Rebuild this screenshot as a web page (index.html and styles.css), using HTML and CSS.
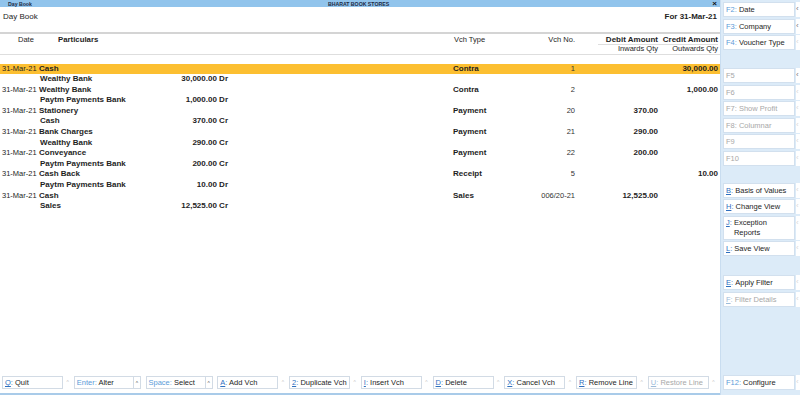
FILE: index.html
```html
<!DOCTYPE html>
<html lang="en">
<head>
    <meta charset="UTF-8">
    <title>Day Book</title>
    <link rel="stylesheet" href="styles.css">
</head>
<body>
    <div class="screen">
        <div class="main">
            <div class="topbar">
                <span class="tb-title">Day Book</span>
                <span class="tb-company">BHARAT BOOK STORES</span>
                <span class="tb-close">&times;</span>
            </div>
            <div class="report-title">
                <span>Day Book</span>
                <span class="period">For 31-Mar-21</span>
            </div>
            <div class="col-head">
                <div class="line grid">
                    <span class="h-date">Date</span>
                    <span class="h-part">Particulars</span>
                    <span></span>
                    <span class="h-type">Vch Type</span>
                    <span class="num">Vch No.</span>
                    <span class="num bold amt-head first">Debit Amount</span>
                    <span class="num bold amt-head">Credit Amount</span>
                </div>
                <div class="line grid">
                    <span></span><span></span><span></span><span></span><span></span>
                    <span class="num">Inwards Qty</span>
                    <span class="num">Outwards Qty</span>
                </div>
            </div>

            <div class="entries">
                <div class="entry">
                    <div class="line grid selected">
                        <span>31-Mar-21</span><span class="bold">Cash</span><span></span>
                        <span class="bold">Contra</span><span class="num">1</span><span></span><span class="num bold">30,000.00</span>
                    </div>
                    <div class="line grid">
                        <span></span><span class="sub"><b>Wealthy Bank</b><b>30,000.00 Dr</b></span>
                    </div>
                </div>
                <div class="entry">
                    <div class="line grid">
                        <span>31-Mar-21</span><span class="bold">Wealthy Bank</span><span></span>
                        <span class="bold">Contra</span><span class="num">2</span><span></span><span class="num bold">1,000.00</span>
                    </div>
                    <div class="line grid">
                        <span></span><span class="sub"><b>Paytm Payments Bank</b><b>1,000.00 Dr</b></span>
                    </div>
                </div>
                <div class="entry">
                    <div class="line grid">
                        <span>31-Mar-21</span><span class="bold">Stationery</span><span></span>
                        <span class="bold">Payment</span><span class="num">20</span><span class="num bold">370.00</span><span></span>
                    </div>
                    <div class="line grid">
                        <span></span><span class="sub"><b>Cash</b><b>370.00 Cr</b></span>
                    </div>
                </div>
                <div class="entry">
                    <div class="line grid">
                        <span>31-Mar-21</span><span class="bold">Bank Charges</span><span></span>
                        <span class="bold">Payment</span><span class="num">21</span><span class="num bold">290.00</span><span></span>
                    </div>
                    <div class="line grid">
                        <span></span><span class="sub"><b>Wealthy Bank</b><b>290.00 Cr</b></span>
                    </div>
                </div>
                <div class="entry">
                    <div class="line grid">
                        <span>31-Mar-21</span><span class="bold">Conveyance</span><span></span>
                        <span class="bold">Payment</span><span class="num">22</span><span class="num bold">200.00</span><span></span>
                    </div>
                    <div class="line grid">
                        <span></span><span class="sub"><b>Paytm Payments Bank</b><b>200.00 Cr</b></span>
                    </div>
                </div>
                <div class="entry">
                    <div class="line grid">
                        <span>31-Mar-21</span><span class="bold">Cash Back</span><span></span>
                        <span class="bold">Receipt</span><span class="num">5</span><span></span><span class="num bold">10.00</span>
                    </div>
                    <div class="line grid">
                        <span></span><span class="sub"><b>Paytm Payments Bank</b><b>10.00 Dr</b></span>
                    </div>
                </div>
                <div class="entry">
                    <div class="line grid">
                        <span>31-Mar-21</span><span class="bold">Cash</span><span></span>
                        <span class="bold">Sales</span><span class="num">006/20-21</span><span class="num bold">12,525.00</span><span></span>
                    </div>
                    <div class="line grid">
                        <span></span><span class="sub"><b>Sales</b><b>12,525.00 Cr</b></span>
                    </div>
                </div>
            </div>

            <div class="bottom-bar">
                <div class="bbtn"><span class="lbl"><u class="k">Q</u><span class="k">:</span> Quit</span><span class="caret">^</span></div>
                <div class="bbtn"><span class="lbl"><span class="kf">Enter:</span> Alter</span><span class="caret on">^</span></div>
                <div class="bbtn"><span class="lbl"><span class="kf">Space:</span> Select</span><span class="caret on">^</span></div>
                <div class="bbtn"><span class="lbl"><u class="k">A</u><span class="k">:</span> Add Vch</span><span class="caret">^</span></div>
                <div class="bbtn"><span class="lbl"><u class="k">2</u><span class="k">:</span> Duplicate Vch</span><span class="caret">^</span></div>
                <div class="bbtn"><span class="lbl"><u class="k">I</u><span class="k">:</span> Insert Vch</span><span class="caret">^</span></div>
                <div class="bbtn"><span class="lbl"><u class="k">D</u><span class="k">:</span> Delete</span><span class="caret">^</span></div>
                <div class="bbtn"><span class="lbl"><u class="k">X</u><span class="k">:</span> Cancel Vch</span><span class="caret">^</span></div>
                <div class="bbtn"><span class="lbl"><u class="k">R</u><span class="k">:</span> Remove Line</span><span class="caret">^</span></div>
                <div class="bbtn off"><span class="lbl"><u class="k">U</u><span class="k">:</span> Restore Line</span><span class="caret">^</span></div>
            </div>
        </div>

        <div class="side">
            <div class="fgroup first">
                <div class="fkey"><span class="lbl"><span class="kf">F2:</span>&nbsp;Date</span><span class="tab on">&lsaquo;</span></div>
                <div class="fkey"><span class="lbl"><span class="kf">F3:</span>&nbsp;Company</span><span class="tab on">&lsaquo;</span></div>
                <div class="fkey"><span class="lbl"><span class="kf">F4:</span>&nbsp;Voucher Type</span><span class="tab">&lsaquo;</span></div>
            </div>
            <div class="fgroup g2">
                <div class="fkey off"><span class="lbl">F5</span><span class="tab on">&lsaquo;</span></div>
                <div class="fkey off"><span class="lbl">F6</span><span class="tab">&lsaquo;</span></div>
                <div class="fkey off"><span class="lbl">F7:&nbsp;Show Profit</span><span class="tab">&lsaquo;</span></div>
                <div class="fkey off"><span class="lbl">F8:&nbsp;Columnar</span><span class="tab">&lsaquo;</span></div>
                <div class="fkey off"><span class="lbl">F9</span><span class="tab">&lsaquo;</span></div>
                <div class="fkey off"><span class="lbl">F10</span><span class="tab">&lsaquo;</span></div>
            </div>
            <div class="fgroup g3">
                <div class="fkey"><span class="lbl"><u class="k">B</u><span class="k">:</span>&nbsp;<span>Basis of Values</span></span><span class="tab">&lsaquo;</span></div>
                <div class="fkey"><span class="lbl"><u class="k">H</u><span class="k">:</span>&nbsp;<span>Change View</span></span><span class="tab">&lsaquo;</span></div>
                <div class="fkey tall"><span class="lbl"><u class="k">J</u><span class="k">:</span>&nbsp;<span>Exception Reports</span></span><span class="tab">&lsaquo;</span></div>
                <div class="fkey"><span class="lbl"><u class="k">L</u><span class="k">:</span>&nbsp;<span>Save View</span></span><span class="tab">&lsaquo;</span></div>
            </div>
            <div class="fgroup g4">
                <div class="fkey"><span class="lbl"><u class="k">E</u><span class="k">:</span>&nbsp;<span>Apply Filter</span></span><span class="tab">&lsaquo;</span></div>
                <div class="fkey off"><span class="lbl"><u class="k">F</u><span class="k">:</span>&nbsp;<span>Filter Details</span></span><span class="tab">&lsaquo;</span></div>
            </div>
            <div class="fgroup last">
                <div class="fkey"><span class="lbl"><span class="kf">F12:</span>&nbsp;Configure</span><span class="tab">&lsaquo;</span></div>
            </div>
        </div>
    </div>
</body>
</html>
```

FILE: styles.css
```css
body {
    margin: 0;
    font-family: "Liberation Sans", Arial, sans-serif;
    color: #1e1e1e;
    background: #fff;
}
.screen {
    display: flex;
    width: 800px;
    height: 395px;
    overflow: hidden;
}
.main {
    width: 720px;
    display: flex;
    flex-direction: column;
    background: #fff;
}
.topbar {
    display: grid;
    grid-template-columns: 1fr auto 1fr;
    align-items: center;
    height: 7px;
    padding: 0 3px 0 8px;
    background: #91c4ec;
    font-size: 5.2px;
    font-weight: bold;
    color: #1c2a44;
}
.tb-company {
    position: relative;
    left: -4px;
}
.tb-close {
    justify-self: end;
    font-size: 8px;
    line-height: 7px;
    color: #111;
}
.report-title {
    display: flex;
    justify-content: space-between;
    height: 27px;
    padding: 5px 3px 0 3px;
    box-sizing: border-box;
    font-size: 8px;
    line-height: 10px;
    border-bottom: 2px solid #d4d4d4;
}
.period {
    font-weight: bold;
}
.grid {
    display: grid;
    grid-template-columns: 37px 189px 225px 80px 42px 83px 60px;
    padding: 0 2px;
}
.line {
    font-size: 7.5px;
    line-height: 10.6px;
    height: 10.6px;
    white-space: nowrap;
}
.col-head {
    padding-top: 0.5px;
    border-bottom: 1px solid #dedede;
}
.col-head .line {
    height: 9.5px;
    line-height: 9.5px;
}
.h-date {
    padding-left: 16px;
}
.h-part {
    padding-left: 19px;
    font-weight: bold;
    font-size: 7.8px;
}
.h-type {
    padding-left: 1px;
}
.amt-head {
    border-bottom: 1px solid #dedede;
    font-size: 8px;
}
.amt-head.first {
    margin-left: 23px;
}
.num {
    text-align: right;
}
.entries .num {
    color: #333;
}
.bold {
    font-weight: bold;
    font-size: 8px;
}
.entries .bold {
    color: #1e1e1e;
}
.entries {
    flex: 1;
    padding-top: 9px;
}
.selected {
    background: #fcbf31;
}
.sub {
    display: flex;
    justify-content: space-between;
    padding-left: 1px;
    font-size: 8px;
}
.bottom-bar {
    display: grid;
    grid-template-columns: repeat(10, 1fr);
    column-gap: 1.6px;
    padding: 2px 2px 4px 2px;
    border-bottom: 2px solid #a9cbe9;
    height: 13px;
}
.bbtn {
    display: flex;
    height: 13px;
    font-size: 7.5px;
    line-height: 11px;
}
.bbtn .lbl {
    flex: 1;
    background: #fff;
    border: 1px solid #d2dbe5;
    padding-left: 2px;
    white-space: nowrap;
    overflow: hidden;
}
.caret {
    width: 9px;
    text-align: center;
    font-size: 5px;
    line-height: 12px;
    color: #c4c4c4;
}
.caret.on {
    color: #555;
    border: 1px solid #d2dbe5;
    border-left: none;
    width: 6px;
    margin-right: 3px;
}
.k {
    color: #2f6fbe;
}
.kf {
    color: #5b9bd8;
}
.off .lbl {
    color: #a8a8a8;
}
.off .k {
    color: #9dbbd9;
}
.side {
    width: 80px;
    display: flex;
    flex-direction: column;
    background: #dcebf8;
    border-left: 1px solid #c9ddf0;
    box-sizing: border-box;
}
.fgroup.first {
    margin-top: 2px;
}
.fgroup.g2 {
    margin-top: 16.5px;
}
.fgroup.g3 {
    margin-top: 15.5px;
}
.fgroup.g4 {
    margin-top: 17.5px;
}
.fgroup.last {
    margin-top: auto;
    margin-bottom: 4px;
}
.fkey {
    display: flex;
    height: 15px;
    margin-bottom: 1.5px;
    font-size: 7.5px;
}
.fkey .lbl {
    display: flex;
    align-items: center;
    width: 72px;
    margin-left: 2px;
    padding-left: 2px;
    box-sizing: border-box;
    background: #fff;
    border: 1px solid #d2e0ee;
    white-space: nowrap;
}
.fkey.tall {
    height: 24px;
}
.fkey.tall .lbl {
    align-items: flex-start;
    padding-top: 1px;
    white-space: normal;
    line-height: 10px;
}
.fkey .tab {
    width: 4px;
    margin-left: 1px;
    background: #fff;
    overflow: hidden;
    font-size: 8px;
    line-height: 14px;
    color: #d8d8d8;
}
.fkey .tab.on {
    color: #777;
}
```
